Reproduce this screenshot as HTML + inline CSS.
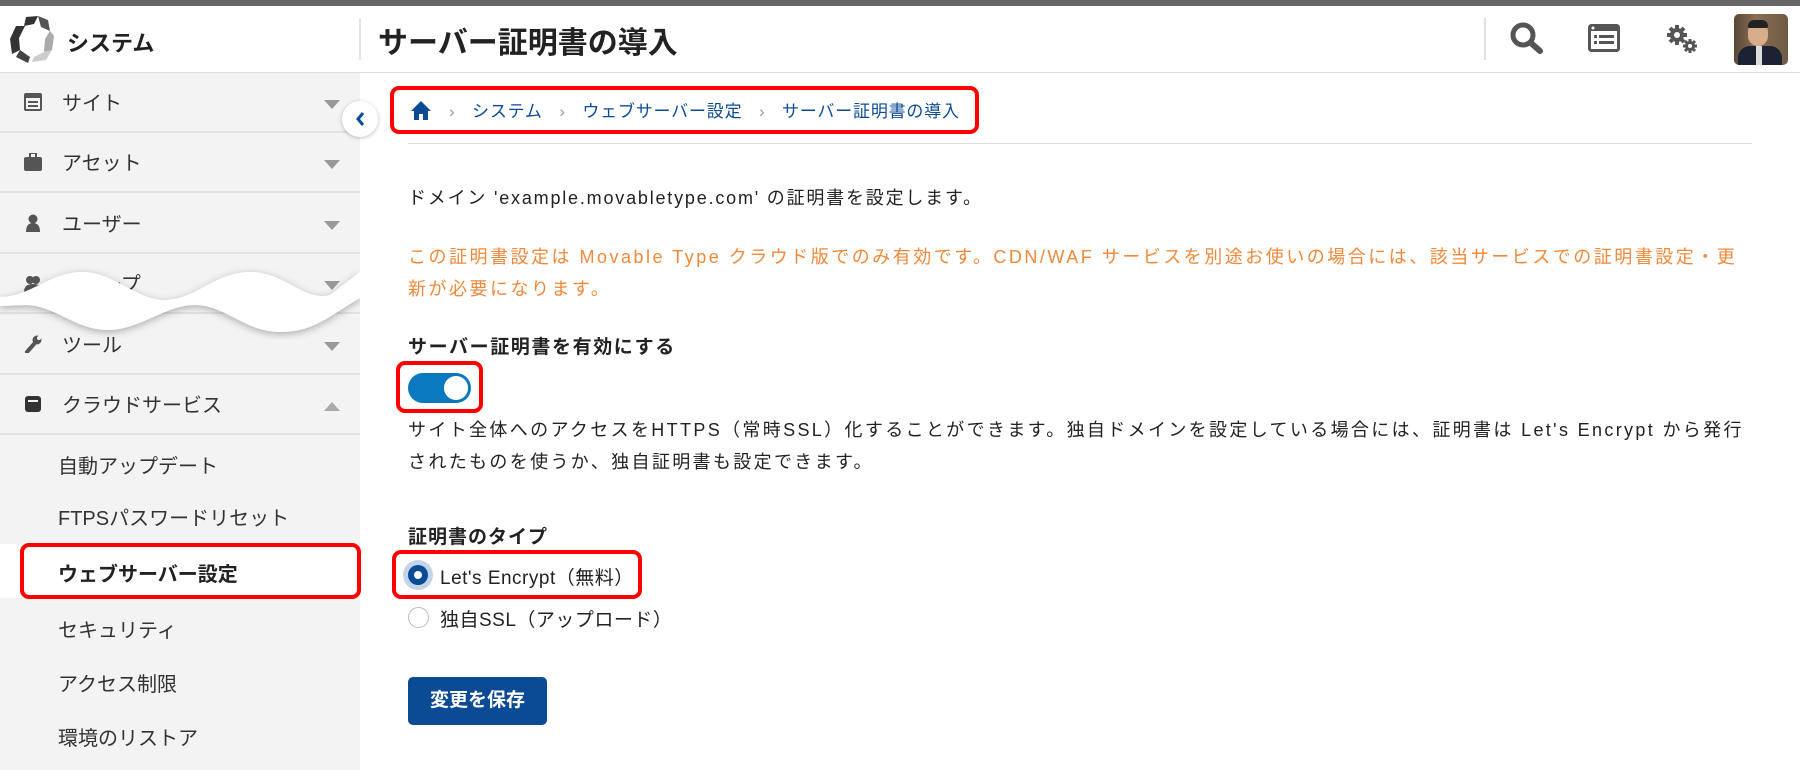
<!DOCTYPE html>
<html><head><meta charset="utf-8"><style>
*{margin:0;padding:0;box-sizing:border-box}
body{width:1800px;height:770px;overflow:hidden;background:#fff;font-family:"Liberation Sans","Noto Sans CJK JP",sans-serif;color:#222;position:relative}
.a{position:absolute;white-space:nowrap}
.side{position:absolute;left:0;top:73px;width:360px;height:697px;background:#f3f3f3}
.item{position:absolute;left:0;width:360px;height:60px;border-bottom:2px solid #e2e2e2;font-size:20px;color:#333}
.item span{position:absolute;left:62px;top:14px}
.item .ic{position:absolute;left:24px;top:20px;width:18px;height:18px}
.item .tri{position:absolute;left:324px;top:27px;width:0;height:0;border-left:8px solid transparent;border-right:8px solid transparent;border-top:9px solid #999}
.sub{position:absolute;left:58px;font-size:20px;color:#333}
.red{position:absolute;border:4px solid #f00;border-radius:9px}
.t{letter-spacing:1.8px}
</style></head><body>
<div class="a" style="left:0;top:0;width:1800px;height:6px;background:#666"></div>
<svg class="a" style="left:8px;top:14px" width="50" height="50" viewBox="0 0 50 50">
<path d="M18 3 L30 2 L26 10 L16 12 Z" fill="#333"/>
<path d="M30 2 L40 6 L42 17 L33 13 Z" fill="#555"/>
<path d="M8 12 L17 12 L11 24 L12 36 L4 40 L2 25 Z" fill="#333"/>
<path d="M42 17 L46 22 L44 36 L36 38 L37 25 Z" fill="#aaa"/>
<path d="M12 36 L22 43 L20 49 L8 43 Z" fill="#444"/>
<path d="M36 38 L44 36 L38 46 L24 48 L26 43 Z" fill="#ccc"/>
</svg>
<div class="a" style="left:67px;top:26px;font-size:22px;font-weight:bold;color:#222">システム</div>
<div class="a" style="left:359px;top:18px;width:2px;height:42px;background:#e6e6e6"></div>
<div class="a" style="left:378px;top:18px;font-size:30px;font-weight:bold;color:#222">サーバー証明書の導入</div>
<div class="a" style="left:1484px;top:18px;width:2px;height:42px;background:#e0e0e0"></div>
<svg class="a" style="left:1510px;top:22px" width="34" height="32" viewBox="0 0 34 32"><circle cx="13" cy="13" r="10" fill="none" stroke="#555" stroke-width="5"/><line x1="21" y1="21" x2="30" y2="29" stroke="#555" stroke-width="6" stroke-linecap="round"/></svg>
<svg class="a" style="left:1588px;top:24px" width="32" height="28" viewBox="0 0 32 28"><rect x="1.5" y="1.5" width="29" height="25" rx="2" fill="none" stroke="#555" stroke-width="3"/><rect x="1" y="1" width="30" height="6" fill="#555"/><circle cx="5" cy="4" r="1.5" fill="#fff"/><rect x="6" y="11" width="3" height="3" fill="#555"/><rect x="11" y="11" width="15" height="3" fill="#555"/><rect x="6" y="17" width="3" height="3" fill="#555"/><rect x="11" y="17" width="15" height="3" fill="#555"/></svg>
<svg class="a" style="left:1666px;top:24px" width="32" height="30" viewBox="0 0 32 30"><g fill="#555"><circle cx="11" cy="11" r="7"/><g stroke="#555" stroke-width="4"><line x1="11" y1="1" x2="11" y2="21"/><line x1="1" y1="11" x2="21" y2="11"/><line x1="4" y1="4" x2="18" y2="18"/><line x1="18" y1="4" x2="4" y2="18"/></g><circle cx="24" cy="22" r="5"/><g stroke="#555" stroke-width="3"><line x1="24" y1="15" x2="24" y2="29"/><line x1="17" y1="22" x2="31" y2="22"/><line x1="19" y1="17" x2="29" y2="27"/><line x1="29" y1="17" x2="19" y2="27"/></g></g><circle cx="11" cy="11" r="3" fill="#fff"/><circle cx="24" cy="22" r="2" fill="#fff"/></svg>
<div class="a" style="left:1734px;top:14px;width:54px;height:51px;border-radius:5px;background:linear-gradient(90deg,#5a4636,#8a6e52 40%,#6e5a46);overflow:hidden">
<div class="a" style="left:14px;top:8px;width:20px;height:24px;border-radius:10px;background:#d8ad8c"></div>
<div class="a" style="left:14px;top:6px;width:20px;height:8px;border-radius:10px 10px 3px 3px;background:#222"></div>
<div class="a" style="left:4px;top:32px;width:44px;height:24px;border-radius:12px 12px 0 0;background:#1a2233"></div>
<div class="a" style="left:22px;top:32px;width:6px;height:20px;background:#ddd"></div>
</div>
<div class="a" style="left:0;top:72px;width:1800px;height:1px;background:#ddd"></div>
<div class="side">
<div class="item" style="top:0"><svg class="ic" viewBox="0 0 18 18"><rect x="1" y="1" width="16" height="16" rx="1" fill="none" stroke="#555" stroke-width="2"/><rect x="1" y="1" width="16" height="4" fill="#555"/><rect x="4" y="8" width="10" height="2" fill="#555"/><rect x="4" y="12" width="10" height="2" fill="#555"/></svg><span>サイト</span><div class="tri"></div></div>
<div class="item" style="top:60px"><svg class="ic" viewBox="0 0 18 18"><rect x="0" y="4" width="18" height="14" rx="2" fill="#555"/><rect x="6" y="0" width="6" height="5" fill="none" stroke="#555" stroke-width="2"/></svg><span>アセット</span><div class="tri"></div></div>
<div class="item" style="top:121px"><svg class="ic" viewBox="0 0 18 18"><circle cx="9" cy="5" r="4.5" fill="#555"/><path d="M2 18 Q2 9 9 9 Q16 9 16 18Z" fill="#555"/></svg><span>ユーザー</span><div class="tri"></div></div>
<div class="item" style="top:181px"><svg class="ic" viewBox="0 0 18 18"><circle cx="6" cy="6" r="4" fill="#555"/><circle cx="12" cy="6" r="4" fill="#555"/><path d="M0 18 Q0 10 9 10 Q18 10 18 18Z" fill="#555"/></svg><span>グループ</span><div class="tri"></div></div>
<div class="item" style="top:242px"><svg class="ic" viewBox="0 0 18 18"><path d="M3 17 L10 9" stroke="#555" stroke-width="4" stroke-linecap="round"/><circle cx="13" cy="5" r="4.5" fill="#555"/><circle cx="15" cy="3" r="2" fill="#f3f3f3"/></svg><span>ツール</span><div class="tri"></div></div>
<div class="item" style="top:302px"><svg class="ic" viewBox="0 0 18 18"><rect x="1" y="1" width="16" height="16" rx="3" fill="#333"/><rect x="4" y="5" width="10" height="2" fill="#f3f3f3"/></svg><span>クラウドサービス</span><div class="tri" style="border-top:0;border-bottom:9px solid #aaa"></div></div>
<div class="sub" style="top:377px">自動アップデート</div>
<div class="sub" style="top:429px">FTPSパスワードリセット</div>
<div class="a" style="left:0;top:471px;width:360px;height:54px;background:#fff"></div>
<div class="sub" style="top:485px;font-weight:bold;color:#222">ウェブサーバー設定</div>
<div class="sub" style="top:541px">セキュリティ</div>
<div class="sub" style="top:595px">アクセス制限</div>
<div class="sub" style="top:649px">環境のリストア</div>
</div>
<div class="red" style="left:20px;top:543px;width:341px;height:56px"></div>
<svg class="a" style="left:0;top:260px" width="360" height="80" viewBox="0 0 360 80">
<defs><filter id="sh" x="-10%" y="-30%" width="120%" height="160%"><feDropShadow dx="0" dy="2" stdDeviation="4" flood-color="#000" flood-opacity="0.3"/></filter></defs>
<path d="M0 37 C30 37 50 12 82 12 C115 12 135 40 165 40 C195 40 215 12 250 12 C285 12 305 42 330 35 L360 12 L360 38 C330 55 315 72 280 72 C245 72 225 45 195 45 C165 45 140 70 108 70 C75 70 55 45 25 45 L0 46 Z" fill="#fff" filter="url(#sh)"/>
</svg>
<div class="a" style="left:342px;top:101px;width:36px;height:36px;border-radius:50%;background:#fff;box-shadow:0 1px 4px rgba(0,0,0,.25)"></div>
<svg class="a" style="left:355px;top:111px" width="10" height="16" viewBox="0 0 10 16"><path d="M8 2 L3 8 L8 14" fill="none" stroke="#0b4a94" stroke-width="3"/></svg>
<div class="red" style="left:390px;top:86px;width:589px;height:48px"></div>
<svg class="a" style="left:410px;top:100px" width="22" height="20" viewBox="0 0 22 20"><path d="M11 1 L1 11 L4 11 L4 20 L9 20 L9 14 L13 14 L13 20 L18 20 L18 11 L21 11Z" fill="#0b4a94"/></svg>
<div class="a" style="left:449px;top:97px;font-size:17px;color:#0b4a94;letter-spacing:0.8px"><span style="color:#999">›</span>&nbsp;&nbsp; システム &nbsp;&nbsp;<span style="color:#999">›</span>&nbsp;&nbsp; ウェブサーバー設定 &nbsp;&nbsp;<span style="color:#999">›</span>&nbsp;&nbsp; サーバー証明書の導入</div>
<div class="a" style="left:408px;top:143px;width:1344px;height:1px;background:#ddd"></div>
<div class="a t" style="left:408px;top:184px;font-size:18px;color:#222">ドメイン 'example.movabletype.com' の証明書を設定します。</div>
<div class="a" style="left:408px;top:241px;font-size:18px;color:#f0883a;line-height:32px;letter-spacing:2.5px">この証明書設定は Movable Type クラウド版でのみ有効です。CDN/WAF サービスを別途お使いの場合には、該当サービスでの証明書設定・更<br>新が必要になります。</div>
<div class="a" style="left:408px;top:332px;font-size:19px;font-weight:bold;letter-spacing:1.6px">サーバー証明書を有効にする</div>
<div class="red" style="left:396px;top:361px;width:87px;height:52px"></div>
<div class="a" style="left:408px;top:373px;width:63px;height:30px;border-radius:15px;background:#0b79c0"></div>
<div class="a" style="left:443px;top:375px;width:26px;height:26px;border-radius:50%;background:#fff;border:1px solid #0b79c0"></div>
<div class="a" style="left:408px;top:414px;font-size:18px;line-height:32px;color:#222;letter-spacing:2.35px">サイト全体へのアクセスをHTTPS（常時SSL）化することができます。独自ドメインを設定している場合には、証明書は Let's Encrypt から発行<br>されたものを使うか、独自証明書も設定できます。</div>
<div class="a" style="left:408px;top:522px;font-size:19px;font-weight:bold;letter-spacing:1px">証明書のタイプ</div>
<div class="red" style="left:392px;top:550px;width:250px;height:49px"></div>
<div class="a" style="left:403px;top:560px;width:30px;height:30px;border-radius:50%;background:#c3d4e8"></div>
<div class="a" style="left:408px;top:565px;width:20px;height:20px;border-radius:50%;background:#0b4a94"></div>
<div class="a" style="left:414px;top:571px;width:8px;height:8px;border-radius:50%;background:#fff"></div>
<div class="a" style="left:440px;top:563px;font-size:19px;letter-spacing:0.5px">Let's Encrypt（無料）</div>
<div class="a" style="left:408px;top:607px;width:21px;height:21px;border-radius:50%;border:1px solid #bbb"></div>
<div class="a" style="left:440px;top:605px;font-size:19px;letter-spacing:0.5px">独自SSL（アップロード）</div>
<div class="a" style="left:408px;top:677px;width:139px;height:48px;border-radius:5px;background:#0b4a94;color:#fff;font-size:19px;font-weight:bold;text-align:center;line-height:48px">変更を保存</div>
</body></html>
